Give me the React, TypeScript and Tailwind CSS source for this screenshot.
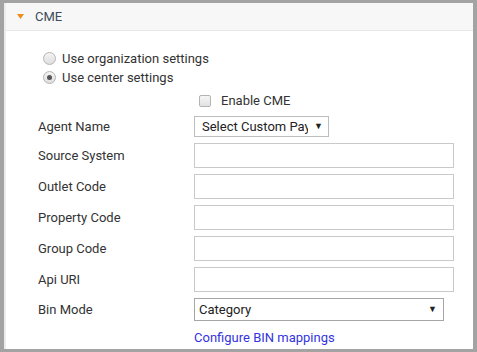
import React from 'react';

const font = { fontFamily: 'Roboto, "Liberation Sans", Arial, sans-serif' };

type Field = { label: string; kind: 'input' | 'agent' | 'bin' };

const fields: Field[] = [
  { label: 'Agent Name', kind: 'agent' },
  { label: 'Source System', kind: 'input' },
  { label: 'Outlet Code', kind: 'input' },
  { label: 'Property Code', kind: 'input' },
  { label: 'Group Code', kind: 'input' },
  { label: 'Api URI', kind: 'input' },
  { label: 'Bin Mode', kind: 'bin' },
];

const Radio = ({ checked, label }: { checked?: boolean; label: string }) => (
  <div className="flex h-[19px] items-center">
    <span className="flex h-[13px] w-[13px] items-center justify-center rounded-full border border-[#b4b4b4] bg-gradient-to-b from-[#f4f4f4] to-[#dedede]">
      {checked && <span className="h-[5px] w-[5px] rounded-full bg-[#555]" />}
    </span>
    <span className="ml-[6px] text-[13px] text-[#333]">{label}</span>
  </div>
);

const Control = ({ kind }: { kind: Field['kind'] }) => {
  if (kind === 'agent') {
    return (
      <div className="flex h-[21px] w-[135px] items-center border border-[#bdbdbd] bg-white pl-[7px]">
        <span className="w-[106px] overflow-hidden whitespace-nowrap text-[13px] text-[#222]">
          Select Custom Pay
        </span>
        <span className="ml-[6px] text-[9px] text-[#222]">▼</span>
      </div>
    );
  }
  if (kind === 'bin') {
    return (
      <div className="flex h-[23px] w-[250px] items-center border border-[#a6a6a6] bg-white pl-[4px] pr-[6px]">
        <span className="text-[13px] text-[#222]">Category</span>
        <span className="ml-auto text-[9px] text-[#222]">▼</span>
      </div>
    );
  }
  return <div className="h-[25px] w-[260px] border border-[#c9c9c9] bg-white" />;
};

export default function App() {
  return (
    <div
      className="h-[352px] w-[477px] bg-[#a3a3a3] pb-[3px] pl-[4px] pr-[4px] pt-[3px]"
      style={font}
    >
      <div className="flex h-full flex-col border-l-2 border-[#ececec] bg-white">
        <div className="flex h-[28px] items-center border-b border-[#e8e8e8] bg-[#f7f7f7] pl-[11px]">
          <svg width="7" height="5" viewBox="0 0 7 5" className="mb-[1px]">
            <polygon points="0,0 7,0 3.5,5" fill="#ea8e1c" />
          </svg>
          <span className="ml-[11px] text-[13px] text-[#3d4b5c]">CME</span>
        </div>

        <div className="flex flex-col pl-[37px] pt-[18px]">
          <Radio label="Use organization settings" />
          <Radio checked label="Use center settings" />
        </div>

        <div className="mt-[4px] flex h-[20px] items-center pl-[193px]">
          <span className="h-[12px] w-[12px] rounded-[2px] border border-[#b4b4b4] bg-gradient-to-b from-[#f6f6f6] to-[#e2e2e2]" />
          <span className="ml-[10px] text-[13px] text-[#333]">Enable CME</span>
        </div>

        <div className="mt-[5px] flex flex-col gap-[6px] pl-[32px]">
          {fields.map((f) => (
            <div key={f.label} className="flex items-center">
              <span className="w-[156px] text-[13px] text-[#333]">{f.label}</span>
              <Control kind={f.kind} />
            </div>
          ))}
          <div className="flex">
            <span className="w-[156px]" />
            <a href="#" className="mt-[1px] text-[13px] text-[#3434e0]">
              Configure BIN mappings
            </a>
          </div>
        </div>
      </div>
    </div>
  );
}
